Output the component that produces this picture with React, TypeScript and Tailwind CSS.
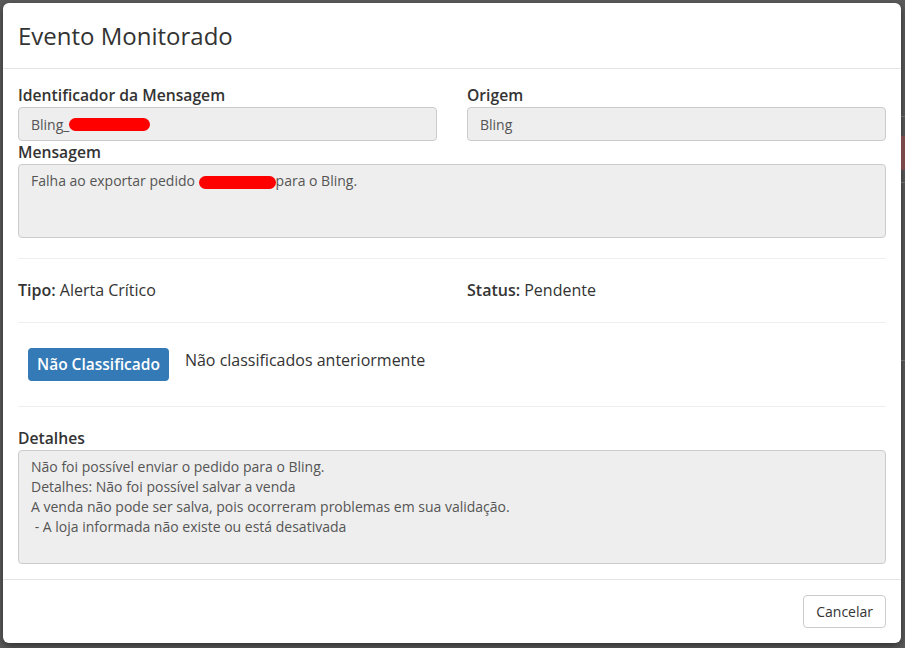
const font = { fontFamily: '"Open Sans", "Noto Sans", sans-serif' };

function Redacted({ w }: { w: string }) {
  return <span className={`inline-block h-[13px] rounded-full bg-[#ff0000] align-middle ${w}`} />;
}

function Field({ label, children, className = "" }: { label: string; children: React.ReactNode; className?: string }) {
  return (
    <div className={className}>
      <div className="mb-[2px] text-[15.7px] font-semibold leading-5 text-[#333]">{label}</div>
      {children}
    </div>
  );
}

export default function App() {
  return (
    <div className="relative h-[648px] w-[905px] overflow-hidden bg-[#5c5c5c] p-[3px]" style={font}>
      {/* page content peeking out on the right */}
      <div className="absolute right-0 top-[136px] h-[34px] w-[4px] bg-[#7a4a4a]" />
      <div className="absolute right-0 top-[116px] h-px w-[4px] bg-[#6c6c6c]" />
      <div className="absolute right-0 top-[182px] h-px w-[4px] bg-[#6c6c6c]" />
      <div className="absolute right-0 top-[360px] h-px w-[4px] bg-[#6c6c6c]" />

      <div className="flex h-[640px] w-[898px] flex-col rounded-md bg-white shadow-[0_3px_9px_rgba(0,0,0,0.5)]">
        <div className="flex h-[66px] items-center border-b border-[#e5e5e5] px-[15px]">
          <h4 className="text-[24px] leading-none text-[#333]">Evento Monitorado</h4>
        </div>

        <div className="flex-1 px-[15px] pt-[16px]">
          <div className="grid grid-cols-2 gap-[30px]">
            <Field label="Identificador da Mensagem">
              <div className="flex h-[34px] items-center rounded border border-[#ccc] bg-[#eee] px-3 text-[14px] text-[#555]">
                Bling_<Redacted w="w-[81px]" />
              </div>
            </Field>
            <Field label="Origem">
              <div className="flex h-[34px] items-center rounded border border-[#ccc] bg-[#eee] px-3 text-[14px] text-[#555]">
                Bling
              </div>
            </Field>
          </div>

          <Field label="Mensagem" className="mt-[1px]">
            <div className="h-[74px] rounded border border-[#ccc] bg-[#eee] px-3 py-[6px] text-[14px] leading-5 text-[#555]">
              Falha ao exportar pedido <Redacted w="w-[77px]" />para o Bling.
            </div>
          </Field>

          <hr className="mb-[20px] mt-[20px] border-[#eee]" />

          <div className="grid grid-cols-2 gap-[30px] text-[16px] leading-[22px] text-[#333]">
            <div><span className="font-semibold">Tipo:</span> Alerta Crítico</div>
            <div><span className="font-semibold">Status:</span> Pendente</div>
          </div>

          <hr className="my-[21px] border-[#eee]" />

          <div className="flex items-start pl-[10px] pt-[4px]">
            <span className="flex h-[33px] items-center rounded bg-[#337ab7] px-[9px] text-[15.5px] font-semibold text-white">
              Não Classificado
            </span>
            <span className="ml-[16px] mt-[2px] text-[16px] leading-5 text-[#333]">Não classificados anteriormente</span>
          </div>

          <hr className="mb-[21px] mt-[25px] border-[#eee]" />

          <Field label="Detalhes">
            <div className="h-[114px] whitespace-pre rounded border border-[#ccc] bg-[#eee] px-3 py-[6px] text-[14px] leading-5 text-[#555]">
              {"Não foi possível enviar o pedido para o Bling.\nDetalhes: Não foi possível salvar a venda\nA venda não pode ser salva, pois ocorreram problemas em sua validação.\n - A loja informada não existe ou está desativada"}
            </div>
          </Field>
        </div>

        <div className="flex justify-end border-t border-[#e5e5e5] px-[15px] pb-[15px] pt-[15px]">
          <button className="h-[33px] rounded border border-[#ccc] bg-white px-3 text-[14px] text-[#333]">Cancelar</button>
        </div>
      </div>
    </div>
  );
}
